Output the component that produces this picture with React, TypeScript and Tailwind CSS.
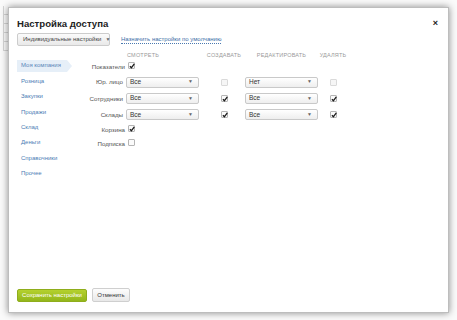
import React from 'react';

const Check: React.FC<{ checked?: boolean; disabled?: boolean }> = ({ checked, disabled }) => (
  <span
    className={`relative inline-flex h-[7px] w-[7px] items-center justify-center rounded-[1px] border ${
      disabled ? 'border-[#dadada] bg-[#f6f6f6]' : 'border-[#b5b5b5] bg-[#fbfbfb]'
    }`}
  >
    {checked && (
      <svg viewBox="0 0 10 10" className="absolute left-[0px] top-[0px] h-[6px] w-[6px]">
        <path d="M1.5 5.5 L4 8 L8.8 1.5" fill="none" stroke="#1a1a1a" strokeWidth="2.2" />
      </svg>
    )}
  </span>
);

const Select: React.FC<{ value: string }> = ({ value }) => (
  <div className="flex h-[11px] w-[73px] items-center justify-between rounded-[2px] border border-[#c9c9c9] bg-gradient-to-b from-white to-[#eeeeee] pl-[3px] pr-[5px] text-[6.5px] text-[#333]">
    <span>{value}</span>
    <span className="text-[5px] text-[#666]">▼</span>
  </div>
);

const App: React.FC = () => {
  const menu = ['Моя компания', 'Розница', 'Закупки', 'Продажи', 'Склад', 'Деньги', 'Справочники', 'Прочее'];

  return (
    <div className="relative h-[320px] w-[457px] overflow-hidden bg-[#fafafa]" style={{ fontFamily: '"Liberation Sans", Arial, sans-serif' }}>
      {/* page behind the dialog */}
      <div className="ml-[3px] mt-[6px] w-[120px] border-l border-[#d5d5d5]">
        {[0, 1, 2, 3, 4].map((i) => (
          <div key={i} className="h-[9px] border-b border-[#d5d5d5]" />
        ))}
      </div>

      {/* dialog */}
      <div className="absolute left-[8px] top-[7px] flex h-[306px] w-[441px] flex-col border border-[#bdbdbd] bg-white shadow-[0_0_7px_rgba(0,0,0,0.45)]">
        {/* header */}
        <div className="flex h-[21px] items-end justify-between pl-[8px] pr-[10px]">
          <h1 className="text-[9.6px] font-bold leading-[11px] text-[#222]">Настройка доступа</h1>
          <span className="text-[9px] font-bold leading-[11px] text-[#222]">×</span>
        </div>

        {/* toolbar */}
        <div className="mt-[4px] flex items-center pl-[8px]">
          <div className="flex h-[13px] w-[93px] items-center gap-[4px] whitespace-nowrap rounded-[2px] border border-[#cccccc] bg-gradient-to-b from-[#fbfbfb] to-[#e9e9e9] px-[5px] text-[6px] text-[#444]">
            <span>Индивидуальные настройки</span>
            <span className="text-[5px] text-[#666]">▼</span>
          </div>
          <span className="ml-[11px] whitespace-nowrap border-b border-dotted border-[#4a79b0] text-[6px] leading-[8px] text-[#3d6ea8]">
            Назначить настройки по умолчанию
          </span>
        </div>

        {/* main */}
        <div className="mt-[4px] flex flex-1 items-start">
          {/* sidebar */}
          <div className="mt-[8px] w-[64px] pl-[8px]">
            {menu.map((m, i) => (
              <div key={m} className="flex h-[15.45px] items-center whitespace-nowrap">
                {i === 0 ? (
                  <div className="relative flex h-[12px] w-[50px] items-center bg-[#e6eff8] pl-[4px] text-[6px] text-[#5b86b8]">
                    {m}
                    <span className="absolute -right-[5px] top-0 h-0 w-0 border-y-[6px] border-l-[5px] border-y-transparent border-l-[#e6eff8]" />
                  </div>
                ) : (
                  <span className="pl-[4px] text-[6px] text-[#4d7db5]">{m}</span>
                )}
              </div>
            ))}
          </div>

          {/* permissions grid */}
          <div className="ml-[1px] grid grid-cols-[52px_73px_46px_73px_30px] items-center whitespace-nowrap text-[6.2px] text-[#555]">
            <div className="h-[10px]" />
            <div className="pl-[1px] text-[5.5px] tracking-[0.2px] text-[#9a9a9a]">СМОТРЕТЬ</div>
            <div className="flex justify-center pl-[4px] text-[5.5px] tracking-[0.2px] text-[#9a9a9a]">СОЗДАВАТЬ</div>
            <div className="flex justify-center text-[5.5px] tracking-[0.2px] text-[#9a9a9a]">РЕДАКТИРОВАТЬ</div>
            <div className="flex justify-center text-[5.5px] tracking-[0.2px] text-[#9a9a9a]">УДАЛЯТЬ</div>

            <div className="flex h-[13px] items-center justify-end pr-[1px]">Показатели</div>
            <div className="pl-[2px]"><Check checked /></div>
            <div />
            <div />
            <div />

            <div className="col-span-5 h-[1px]" />

            <div className="flex h-[16px] items-center justify-end pr-[3px]">Юр. лицо</div>
            <div><Select value="Все" /></div>
            <div className="flex justify-center pl-[4px]"><Check disabled /></div>
            <div><Select value="Нет" /></div>
            <div className="flex justify-center"><Check disabled /></div>

            <div className="flex h-[16.5px] items-center justify-end pr-[3px]">Сотрудники</div>
            <div><Select value="Все" /></div>
            <div className="flex justify-center pl-[4px]"><Check checked /></div>
            <div><Select value="Все" /></div>
            <div className="flex justify-center"><Check checked /></div>

            <div className="flex h-[16px] items-center justify-end pr-[3px]">Склады</div>
            <div><Select value="Все" /></div>
            <div className="flex justify-center pl-[4px]"><Check checked /></div>
            <div><Select value="Все" /></div>
            <div className="flex justify-center"><Check checked /></div>

            <div className="flex h-[15px] items-center justify-end pr-[1px]">Корзина</div>
            <div className="pl-[2px]"><Check checked /></div>
            <div />
            <div />
            <div />

            <div className="flex h-[13px] items-center justify-end pr-[1px]">Подписка</div>
            <div className="pl-[2px]"><Check /></div>
            <div />
            <div />
            <div />
          </div>
        </div>

        {/* footer */}
        <div className="flex items-center gap-[5px] pb-[10px] pl-[8px]">
          <button className="flex h-[13px] w-[70px] items-center justify-center whitespace-nowrap rounded-[2px] border border-[#8fad1c] bg-gradient-to-b from-[#b4d12e] to-[#93b61a] text-[6px] text-white">
            Сохранить настройки
          </button>
          <button className="flex h-[14px] w-[38px] items-center justify-center rounded-[2px] border border-[#cfcfcf] bg-gradient-to-b from-[#fdfdfd] to-[#e8e8e8] text-[6px] text-[#333]">
            Отменить
          </button>
        </div>
      </div>
    </div>
  );
};

export default App;
